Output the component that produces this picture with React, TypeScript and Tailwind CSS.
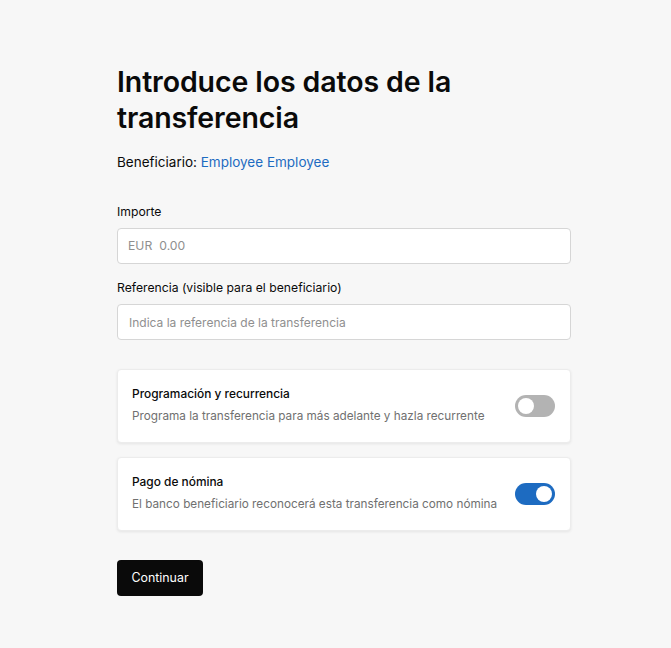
import React, { useState } from "react";

function Toggle({ on, onChange }: { on: boolean; onChange: () => void }) {
  return (
    <button
      onClick={onChange}
      className={`relative w-[40px] h-[22px] rounded-full shrink-0 ${on ? "bg-[#1d6bc1]" : "bg-[#b3b3b3]"}`}
    >
      <span
        className={`absolute top-[3px] w-[16px] h-[16px] rounded-full bg-white ${on ? "left-[21px]" : "left-[3px]"}`}
      />
    </button>
  );
}

export default function App() {
  const [prog, setProg] = useState(false);
  const [nomina, setNomina] = useState(true);
  return (
    <div className="min-h-[648px] w-full bg-[#f7f7f7] text-[#0a0a0a]" style={{ fontFamily: "Inter, 'Noto Sans', sans-serif" }}>
      <div className="w-[454px] ml-[117px] pt-[64px] pb-[52px]">
        <h1 className="text-[28.5px] leading-[36px] font-semibold tracking-[-0.1px]">
          Introduce los datos de la transferencia
        </h1>
        <p className="mt-[16px] text-[13.5px] leading-[20px]">
          Beneficiario: <span className="text-[#1d6bc1]">Employee Employee</span>
        </p>

        <div className="mt-[31px]">
          <label className="block text-[12.2px] leading-[18px] mb-[7px]">Importe</label>
          <div className="h-[36px] rounded-[4px] border border-[#d6d6d6] bg-white flex items-center px-[10px] text-[12.2px] text-[#8f8f8f]">
            <span>EUR</span>
            <span className="ml-[7px]">0.00</span>
          </div>
        </div>

        <div className="mt-[15px]">
          <label className="block text-[12.2px] leading-[18px] mb-[7px]">Referencia (visible para el beneficiario)</label>
          <input
            className="w-full h-[36px] rounded-[4px] border border-[#d6d6d6] bg-white px-[11px] text-[12px] outline-none placeholder:text-[#8f8f8f]"
            placeholder="Indica la referencia de la transferencia"
          />
        </div>

        <div className="mt-[29px] flex flex-col gap-[14px]">
          <div className="h-[74px] rounded-[4px] bg-white border border-[#ececec] shadow-[0_1px_3px_rgba(0,0,0,0.08)] flex items-center justify-between pl-[14px] pr-[15px]">
            <div className="pb-[3px]">
              <div className="text-[11.9px] leading-[18px] font-medium">Programación y recurrencia</div>
              <div className="text-[11.75px] leading-[18px] text-[#707070] mt-[4px]">Programa la transferencia para más adelante y hazla recurrente</div>
            </div>
            <Toggle on={prog} onChange={() => setProg(!prog)} />
          </div>
          <div className="h-[74px] rounded-[4px] bg-white border border-[#ececec] shadow-[0_1px_3px_rgba(0,0,0,0.08)] flex items-center justify-between pl-[14px] pr-[15px]">
            <div className="pb-[3px]">
              <div className="text-[11.9px] leading-[18px] font-medium">Pago de nómina</div>
              <div className="text-[11.75px] leading-[18px] text-[#707070] mt-[4px]">El banco beneficiario reconocerá esta transferencia como nómina</div>
            </div>
            <Toggle on={nomina} onChange={() => setNomina(!nomina)} />
          </div>
        </div>

        <button className="mt-[29px] h-[36px] w-[86px] rounded-[4px] bg-[#0a0a0a] text-white text-[12.4px]">
          Continuar
        </button>
      </div>
    </div>
  );
}
